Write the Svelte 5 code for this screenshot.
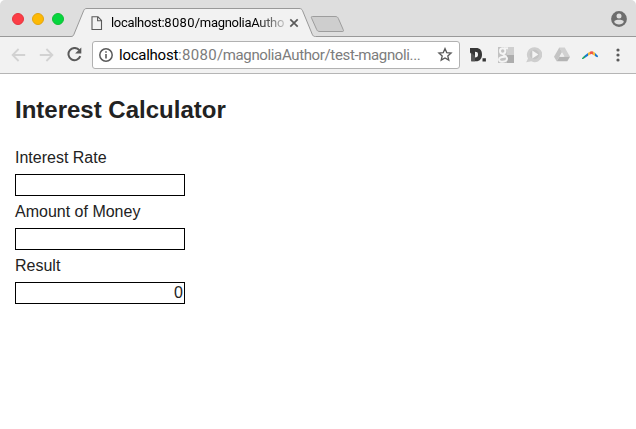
<script>
  const fields = [
    { label: 'Interest Rate', value: '' },
    { label: 'Amount of Money', value: '' },
    { label: 'Result', value: '0' }
  ];
</script>

<div class="window">
  <header class="tabstrip">
    <svg class="strip-bg" width="636" height="37" viewBox="0 0 636 37">
      <path d="M-1 36.5H71C73 36.5 73.4 35.6 74 34.2L83.6 10.8C84.4 9 85 8.5 87 8.5H299C301 8.5 301.8 9 302.6 10.8L312.2 34.2C313 36 313.6 36.5 315.6 36.5H637V38H-1Z" fill="#f2f2f2" stroke="#999" />
      <path d="M312.6 16.5H335C337 16.5 337.7 17 338.4 18.6L343.2 29.6C343.9 31.2 343.5 31.5 342 31.5H320C318 31.5 317.3 31 316.6 29.4L311.6 18.2C311 16.9 311.3 16.5 312.6 16.5Z" fill="#cecece" stroke="#9d9d9d" />
    </svg>
    <div class="lights">
      <span class="red"></span><span class="yellow"></span><span class="green"></span>
    </div>
    <div class="tab">
      <svg class="page" width="12" height="15" viewBox="0 0 12 15" fill="none" stroke="#5a5a5a">
        <path d="M1 .8H7L10.5 4.4V13.5H1ZM6.6 1V4.8H10.4" stroke-width="1.1" />
      </svg>
      <span class="title">localhost:<i>8080</i>/magnoliaAutho</span>
      <svg width="10" height="10" viewBox="0 0 10 10" stroke="#5a5a5a" stroke-width="1.7"><path d="M1.3 1.3L8.7 8.7M8.7 1.3L1.3 8.7" /></svg>
    </div>
    <svg class="user" width="16" height="16" viewBox="0 0 16 16">
      <circle cx="8" cy="8" r="7.9" fill="#6d6d6d" />
      <circle cx="8" cy="5" r="2.5" fill="#dedede" />
      <path d="M3.2 10.8C3.5 8.2 12.5 8.2 12.8 10.8C11.5 14.3 4.5 14.3 3.2 10.8Z" fill="#dedede" />
    </svg>
  </header>

  <nav class="toolbar">
    <svg class="back" width="15" height="14" viewBox="0 0 15 14" fill="none" stroke="#d2d2d2" stroke-width="1.8"><path d="M14.2 7H1.8M7.6 1L1.6 7L7.6 13" /></svg>
    <svg class="forward" width="15" height="14" viewBox="0 0 15 14" fill="none" stroke="#d2d2d2" stroke-width="1.8"><path d="M.8 7H13.2M7.4 1L13.4 7L7.4 13" /></svg>
    <svg class="reload" width="15" height="15" viewBox="0 0 15 15"><path d="M12.3 3.2A6.1 6.1 0 1 0 13.3 9.2" fill="none" stroke="#5a5a5a" stroke-width="2" /><path d="M14.3 .4V6.6H8.1Z" fill="#5a5a5a" /></svg>
    <div class="omnibox">
      <svg class="info" width="14" height="14" viewBox="0 0 14 14"><circle cx="7" cy="7" r="6.2" fill="none" stroke="#5a5a5a" stroke-width="1.5" /><path d="M6.2 3.2H7.8V4.8H6.2ZM6.2 6H7.8V10.6H6.2Z" fill="#5a5a5a" /></svg>
      <span class="url"><b>localhost</b><i>:8080</i>/magnoliaAuthor/test-magnoli...</span>
      <svg class="star" width="16" height="15" viewBox="0 0 16 15" fill="none" stroke="#5a5a5a" stroke-width="1.3"><path d="M8 1.6L9.7 5.6L14.1 6L10.8 8.9L11.8 13.1L8 10.9L4.2 13.1L5.2 8.9L1.9 6L6.3 5.6Z" /></svg>
    </div>
    <div class="extensions">
      <svg width="16" height="16" viewBox="0 0 16 16"><path d="M0 1H6C10.2 1 12 3.6 12 7.5S10 14.3 6 14.3H1.3V7L0 5.5ZM5 4.8V10.6C7.2 10.6 8 9.8 8 7.6S7.2 4.8 5 4.8ZM12.5 11.3H15.9V14.5H12.5Z" fill="#373737" fill-rule="evenodd" /><path d="M1.3 5.5L5 9V14.3H1.3Z" fill="#555" /></svg>
      <svg width="16" height="16" viewBox="0 0 16 16"><path d="M0 0H16V16H0Z" fill="#c2c2c2" /><path d="M9 0H16V8H9Z" fill="#cfcfcf" /><path d="M9 8H16V16H9Z" fill="#adadad" /><g fill="none" stroke="#f4f4f4" stroke-width="2"><circle cx="4.7" cy="4" r="2.7" /><path d="M6 1.3H10M6 6.6C3 8 9.5 8.6 9 12C8.6 15.5 1 15.7 1 12.6C1 10 4.5 9.7 7 9.8" /></g></svg>
      <svg width="16" height="16" viewBox="0 0 16 16"><path d="M8.5 .3A7.4 7.4 0 1 1 5.4 14.2L.2 15.2L2 11.5A7.4 7.4 0 0 1 8.5 .3Z" fill="#cecece" /><circle cx="8.5" cy="7.5" r="4.7" fill="#c4c4c4" /><path d="M6.3 3.5L12.4 7.5L6.3 11.5Z" fill="#f4f4f4" /></svg>
      <svg width="16" height="15" viewBox="0 0 16 15"><path d="M5.3 .5H10.7L16 9.7H10.6Z" fill="#d1d1d1" /><path d="M5.3 .5L0 9.7L2.7 14.3L8 5.1Z" fill="#c4c4c4" /><path d="M5.4 9.7H16L13.3 14.3H2.7Z" fill="#b4b4b4" /><path d="M8 6.2L10 9.7H6Z" fill="#eee" /></svg>
      <svg width="16" height="16" viewBox="0 0 16 16">
        <defs>
          <linearGradient id="arc" x1="0" y1="0" x2="16" y2="0" gradientUnits="userSpaceOnUse">
            <stop offset=".16" stop-color="#20a66a" /><stop offset=".22" stop-color="#1679cf" />
            <stop offset=".35" stop-color="#1679cf" /><stop offset=".4" stop-color="#f5b53b" />
            <stop offset=".48" stop-color="#f5b53b" /><stop offset=".53" stop-color="#ee5748" />
            <stop offset=".66" stop-color="#ee5748" /><stop offset=".72" stop-color="#f6bd3c" />
            <stop offset=".78" stop-color="#f6bd3c" /><stop offset=".83" stop-color="#1677cf" />
          </linearGradient>
        </defs>
        <path d="M0 11.2C1.4 9.2 4.4 7.4 7 5.2C8.8 3.8 10.9 3.8 12.3 5.2L15.8 8.8C16.4 9.8 15.4 10.7 14.2 9.8L10.6 7.4C9.6 6.9 8.6 7.1 7.6 7.8L1.6 11.7C.6 12.2-.3 12 0 11.2Z" fill="url(#arc)" />
      </svg>
    </div>
    <svg class="menu" width="4" height="14" viewBox="0 0 4 14" fill="#5a5a5a"><circle cx="2" cy="2" r="1.6" /><circle cx="2" cy="7" r="1.6" /><circle cx="2" cy="12" r="1.6" /></svg>
  </nav>

  <main>
    <h1>Interest Calculator</h1>
    {#each fields as field}
      <label>
        <span class="name">{field.label}</span>
        <span class="box">{field.value}</span>
      </label>
    {/each}
  </main>
</div>

<style>
  :global(body) { margin: 0; background: #fff; }
  .window { width: 636px; height: 429px; overflow: hidden; background: #fff; color: #222; font-family: "Liberation Sans", Arial, sans-serif; }
  svg { display: block; flex: none; }
  i { font-style: normal; }
  .tabstrip { position: relative; box-sizing: border-box; height: 37px; display: flex; align-items: center; padding: 1px 9px 0 12px; background: #dedede; border-radius: 5px 5px 0 0; overflow: hidden; }
  .strip-bg { position: absolute; left: 0; top: 0; }
  .lights { position: relative; display: flex; gap: 8px; }
  .lights span { box-sizing: border-box; width: 12px; height: 12px; border-radius: 50%; }
  .red { background: #fc3d46; border: 1px solid #e5353f; }
  .yellow { background: #fdb904; border: 1px solid #e2a511; }
  .green { background: #05d63e; border: 1px solid #13bd35; }
  .tab { position: relative; display: flex; align-items: center; margin: 8px 0 0 27px; }
  .title { width: 175px; margin: 0 3px 0 8px; white-space: nowrap; color: #000; font: 13px/20px Roboto, sans-serif; letter-spacing: -0.3px; -webkit-mask-image: linear-gradient(to right, #000 145px, transparent 180px); mask-image: linear-gradient(to right, #000 145px, transparent 180px); }
  .title i { letter-spacing: 0.3px; }
  .user { position: relative; margin-left: auto; }
  .toolbar { box-sizing: border-box; height: 37px; display: flex; align-items: center; padding: 0 16px 1px 11px; background: #f2f2f2; border-bottom: 1px solid #b5b5b5; }
  .forward { margin-left: 13px; }
  .reload { margin-left: 13px; }
  .omnibox { box-sizing: border-box; width: 368px; height: 28px; margin-left: 10px; display: flex; align-items: center; padding: 0 6px; background: #fff; border: 1px solid #b1b1b1; border-radius: 3px; }
  .url { width: 310px; margin-left: 6px; white-space: nowrap; font: 15px/22px Roboto, sans-serif; color: #7c7c7c; letter-spacing: -0.36px; }
  .url b { font-weight: 400; color: #000; letter-spacing: -0.25px; }
  .url i { letter-spacing: 0.3px; }
  .star { margin-left: auto; }
  .extensions { display: flex; align-items: center; gap: 12px; margin-left: 10px; }
  .menu { margin-left: auto; }
  main { padding: 22px 15px 0; }
  h1 { margin: 0 0 26px; font-size: 24px; line-height: 28px; }
  label { display: block; height: 54px; }
  .name { display: block; height: 24px; font-size: 16px; line-height: 16px; }
  .box { box-sizing: border-box; display: block; width: 170px; height: 22px; padding: 0 1px; border: 1px solid #000; background: #fff; text-align: right; font-size: 16px; line-height: 20px; }
</style>
